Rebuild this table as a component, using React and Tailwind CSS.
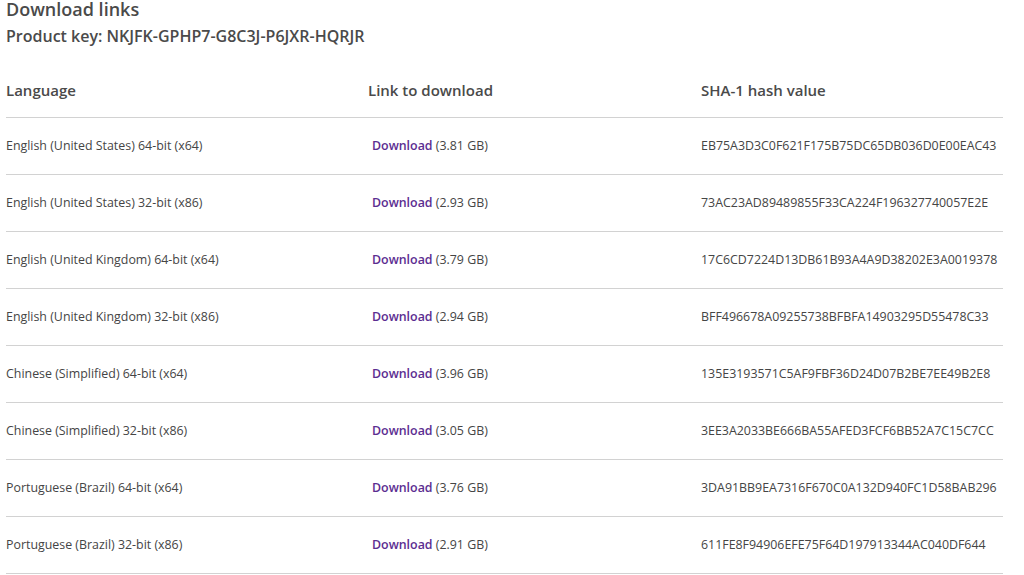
const rows = [
  ["English (United States) 64-bit (x64)", "3.81 GB", "EB75A3D3C0F621F175B75DC65DB036D0E00EAC43"],
  ["English (United States) 32-bit (x86)", "2.93 GB", "73AC23AD89489855F33CA224F196327740057E2E"],
  ["English (United Kingdom) 64-bit (x64)", "3.79 GB", "17C6CD7224D13DB61B93A4A9D38202E3A0019378"],
  ["English (United Kingdom) 32-bit (x86)", "2.94 GB", "BFF496678A09255738BFBFA14903295D55478C33"],
  ["Chinese (Simplified) 64-bit (x64)", "3.96 GB", "135E3193571C5AF9FBF36D24D07B2BE7EE49B2E8"],
  ["Chinese (Simplified) 32-bit (x86)", "3.05 GB", "3EE3A2033BE666BA55AFED3FCF6BB52A7C15C7CC"],
  ["Portuguese (Brazil) 64-bit (x64)", "3.76 GB", "3DA91BB9EA7316F670C0A132D940FC1D58BAB296"],
  ["Portuguese (Brazil) 32-bit (x86)", "2.91 GB", "611FE8F94906EFE75F64D197913344AC040DF644"],
];

export default function App() {
  return (
    <div className="h-[575px] overflow-hidden bg-white px-[6px] text-[#454545]" style={{ fontFamily: '"Open Sans", "Noto Sans", sans-serif' }}>
      <h2 className="-mt-[4px] text-[18px] font-semibold leading-[26px] text-[#4a4a4a]">Download links</h2>
      <p className="mt-[4px] text-[16px] font-semibold leading-[20px] text-[#4a4a4a]">Product key: NKJFK-GPHP7-G8C3J-P6JXR-HQRJR</p>

      <div className="mt-[14px] w-[997px]">
        <div className="grid grid-cols-[362px_333px_1fr] border-b border-[#d2d2d2] h-[58px] pt-[4px] items-center text-[15px] font-semibold text-[#4a4a4a]">
          <div>Language</div>
          <div>Link to download</div>
          <div>SHA-1 hash value</div>
        </div>
        {rows.map(([lang, size, hash]) => (
          <div key={hash} className="grid grid-cols-[362px_333px_1fr] border-b border-[#d2d2d2] h-[57px] items-center text-[12.4px]">
            <div>{lang}</div>
            <div className="pl-[4px]">
              <a href="#" className="font-semibold text-[#5c2d91]">Download</a> ({size})
            </div>
            <div>{hash}</div>
          </div>
        ))}
      </div>
    </div>
  );
}
